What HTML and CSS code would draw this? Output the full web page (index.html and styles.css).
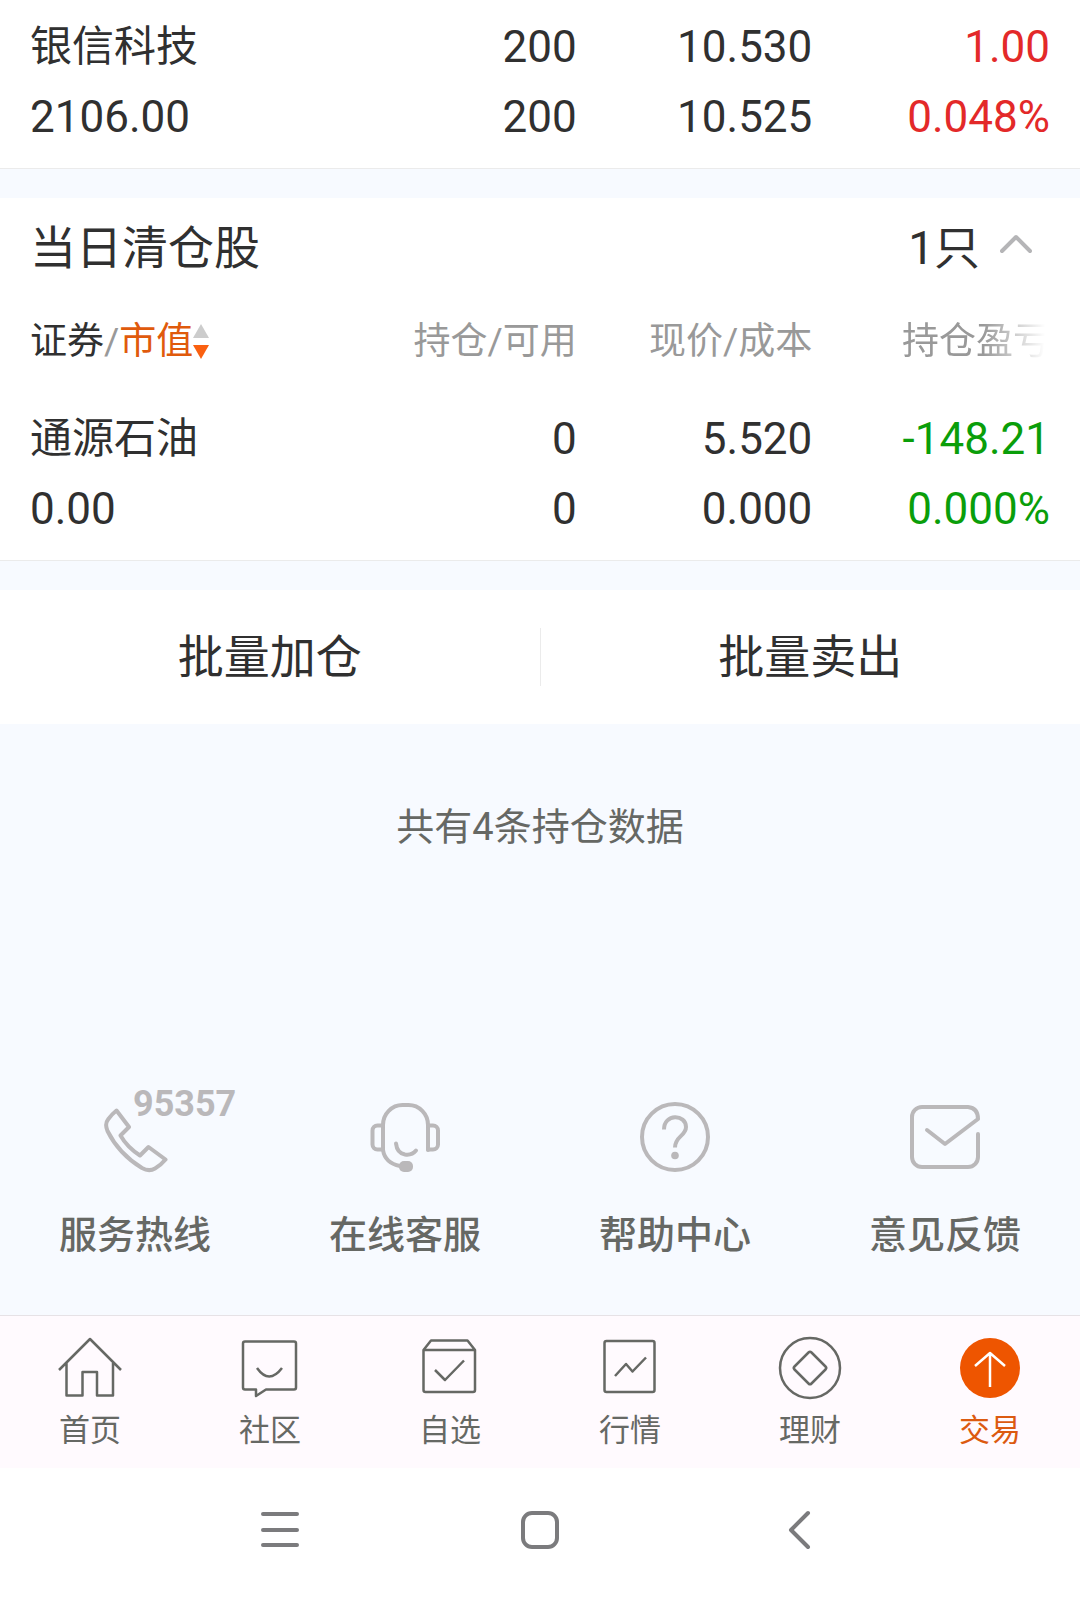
FILE: index.html
```html
<!DOCTYPE html>
<html lang="zh-CN">
<head>
  <meta charset="UTF-8" />
  <meta name="viewport" content="width=device-width, initial-scale=1.0"/>
  <title>交易 | 持仓</title>
  <link rel="stylesheet" href="styles.css">
</head>
<body>
  <main>
    <section class="holdings">
      <table class="stock-table">
        <colgroup><col class="col-name"><col class="col-qty"><col class="col-price"><col class="col-profit"></colgroup>
        <tbody>
          <tr>
            <td><span class="name">银信科技</span><span>2106.00</span></td>
            <td><span>200</span><span>200</span></td>
            <td><span>10.530</span><span>10.525</span></td>
            <td class="up"><span>1.00</span><span>0.048%</span></td>
          </tr>
        </tbody>
      </table>
    </section>

    <section class="cleared">
      <div class="section-title">
        <h2>当日清仓股</h2>
        <button class="toggle" type="button">
          1只
          <svg class="chevron" viewBox="0 0 32 20"><path d="M2 17 16 3l14 14"/></svg>
        </button>
      </div>
      <table class="stock-table">
        <colgroup><col class="col-name"><col class="col-qty"><col class="col-price"><col class="col-profit"></colgroup>
        <thead>
          <tr>
            <th>
              <div class="sort">
                <span class="dark">证券</span>/<span class="active">市值</span>
                <svg class="sort-icon" viewBox="0 0 16 36"><path class="asc" d="M8 0 16 14H0z"/><path class="desc" d="M0 21h16L8 35z"/></svg>
              </div>
            </th>
            <th>持仓/可用</th>
            <th>现价/成本</th>
            <th><span class="fade">持仓盈亏</span></th>
          </tr>
        </thead>
        <tbody>
          <tr>
            <td><span class="name">通源石油</span><span>0.00</span></td>
            <td><span>0</span><span>0</span></td>
            <td><span>5.520</span><span>0.000</span></td>
            <td class="down"><span>-148.21</span><span>0.000%</span></td>
          </tr>
        </tbody>
      </table>
    </section>

    <div class="batch">
      <button type="button">批量加仓</button>
      <button type="button">批量卖出</button>
    </div>

    <p class="count">共有4条持仓数据</p>

    <div class="services">
      <a href="#">
        <span class="service-icon">
          <svg viewBox="0 0 72 72"><path d="M17.500 9.500 30 26l-8.500 8.500Q28 46 41 54.500l8.500-8.500L66.500 58.500Q62 64 56 67.500 50 71 43 67 20 53 8.500 30 5.500 23 9 18.500 13 13 17.500 9.500z"/></svg>
          <span class="hotline">95357</span>
        </span>
        服务热线
      </a>
      <a href="#">
        <span class="service-icon">
          <svg viewBox="0 0 72 72">
            <path d="M59 49V24A19.500 20 0 0 0 39.500 4h-6A19.500 20 0 0 0 14 24v25q2 13 17 16"/>
            <path d="M14 24.500H8.500a5 5 0 0 0-5 5v14a5 5 0 0 0 5 5H14M59 24.500h5a5 5 0 0 1 5 5v14a5 5 0 0 1-5 5h-5"/>
            <path d="M27 42.500Q28 52 36 53.500q7 1 11-4"/>
            <rect class="solid" x="30" y="60" width="14" height="11" rx="5"/>
          </svg>
        </span>
        在线客服
      </a>
      <a href="#">
        <span class="service-icon">
          <svg viewBox="0 0 72 72">
            <circle cx="36" cy="36" r="33"/>
            <path class="butt" d="M25 28.500C25 12 47 13 47 26c0 9-11 9-11 20.500"/>
            <circle class="solid" cx="36" cy="54.500" r="3.800"/>
          </svg>
        </span>
        帮助中心
      </a>
      <a href="#">
        <span class="service-icon">
          <svg viewBox="0 0 72 72"><path d="M69 33v23a10 10 0 0 1-10 10H13A10 10 0 0 1 3 56V16A10 10 0 0 1 13 6h46q10 1 10 12L36 43 18 29"/></svg>
        </span>
        意见反馈
      </a>
    </div>
  </main>

  <nav class="tabbar">
    <a href="#">
      <svg viewBox="0 0 64 64"><path d="M1 34 32 3l31 31M8.500 27v32.500h16V36H39v23.500h16V27"/></svg>
      首页
    </a>
    <a href="#">
      <svg viewBox="0 0 64 64"><path d="M7 5.500h49a2 2 0 0 1 2 2v44a2 2 0 0 1-2 2H28L18 60v-6.500H7a2 2 0 0 1-2-2v-44a2 2 0 0 1 2-2zM19 32q12 17 25 0"/></svg>
      社区
    </a>
    <a href="#">
      <svg viewBox="0 0 64 64"><path d="M5.500 14v40a2 2 0 0 0 2 2H55a2 2 0 0 0 2-2V14zM5.500 14l7.500-9.500h36.500L57 14M17 34l10 10 19-19.500"/></svg>
      自选
    </a>
    <a href="#">
      <svg viewBox="0 0 64 64"><rect x="6.500" y="5" width="50" height="51" rx="2"/><path d="M17 40l11-12 6.500 7.500L48 21.500"/></svg>
      行情
    </a>
    <a href="#">
      <svg viewBox="0 0 64 64"><circle cx="32" cy="32" r="30"/><path d="M30.500 16.500q1.500-1.500 3 0l14 14q1.500 1.500 0 3l-14 14q-1.500 1.500-3 0l-14-14q-1.500-1.500 0-3z"/></svg>
      理财
    </a>
    <a href="#" class="current">
      <svg viewBox="0 0 64 64"><circle cx="32" cy="32" r="30"/><path d="M32 51V17M17 30l15-13 15 13"/></svg>
      交易
    </a>
  </nav>

  <div class="system-nav">
    <button type="button" aria-label="菜单"><svg viewBox="0 0 40 40"><path d="M3 4h34M3 20h34M3 35h34"/></svg></button>
    <button type="button" aria-label="主页"><svg viewBox="0 0 40 40"><rect x="3" y="3" width="34" height="34" rx="9"/></svg></button>
    <button type="button" aria-label="返回"><svg viewBox="0 0 40 40"><path d="M28 3 11 20l17 17"/></svg></button>
  </div>
</body>
</html>
```
FILE: styles.css
```css
* {
  box-sizing: border-box;
}

body {
  font-family: Roboto, "Noto Sans CJK SC", sans-serif;
  background-color: #f7faff;
  color: #303030;
  margin: 0;
  min-height: 100vh;
  display: flex;
  flex-direction: column;
}

button {
  font: inherit;
  color: inherit;
  background: none;
  border: none;
  padding: 0;
  cursor: pointer;
}

a {
  color: inherit;
  text-decoration: none;
}

svg {
  display: block;
  fill: none;
  stroke: currentColor;
}

main {
  flex: 1;
  display: flex;
  flex-direction: column;
}

/* stock lists */
.holdings,
.cleared {
  background: #fff;
  padding: 0 30px;
  border-bottom: 1px solid #ebebeb;
  margin-bottom: 29px;
}

.holdings {
  padding-top: 2px;
}

.stock-table {
  width: 100%;
  table-layout: fixed;
  border-collapse: collapse;
}

.col-name {
  width: 30%;
}

.col-qty {
  width: 23.6%;
}

.col-price {
  width: 23.1%;
}

.col-profit {
  width: 23.3%;
}

.stock-table th {
  height: 104px;
  padding: 0;
  font-size: 37px;
  font-weight: 400;
  line-height: 48px;
  text-align: right;
  white-space: nowrap;
  color: #999;
}

.stock-table td {
  padding: 10px 0 16px;
  font-size: 44px;
  line-height: 70px;
  text-align: right;
}

.stock-table td:first-child {
  text-align: left;
}

.stock-table td span {
  display: block;
}

.stock-table .name {
  font-size: 42px;
}

.up {
  color: #e32929;
}

.down {
  color: #0a9e0a;
}

.sort {
  display: flex;
  align-items: center;
}

.dark {
  color: #303030;
}

.active {
  color: #e05a0c;
}

.sort-icon {
  width: 16px;
  height: 36px;
  stroke: none;
}

.asc {
  fill: #ccc;
}

.desc {
  fill: #fa6010;
}

.fade {
  display: block;
  -webkit-mask-image: linear-gradient(to right, #000 72%, transparent 98%);
  mask-image: linear-gradient(to right, #000 72%, transparent 98%);
}

.section-title {
  display: flex;
  align-items: center;
  justify-content: space-between;
  height: 92px;
  font-size: 46px;
}

.section-title h2 {
  margin: 0;
  font-size: 46px;
  font-weight: 400;
}

.toggle {
  display: flex;
  align-items: center;
  gap: 20px;
  padding-right: 18px;
}

.chevron {
  width: 32px;
  height: 20px;
  color: #b5b5b7;
  stroke-width: 4;
  stroke-linecap: round;
  stroke-linejoin: round;
}

/* batch buttons */
.batch {
  display: flex;
  background: #fff;
  height: 134px;
  align-items: center;
}

.batch button {
  flex: 1;
  font-size: 46px;
  line-height: 58px;
}

.batch button:first-child {
  border-right: 1px solid #ebebeb;
}

.count {
  margin: 74px 0;
  text-align: center;
  font-size: 38px;
  line-height: 58px;
  color: #666864;
}

/* service shortcuts */
.services {
  display: grid;
  grid-template-columns: repeat(4, 1fr);
  margin-top: auto;
  padding-bottom: 56px;
}

.services a {
  display: flex;
  flex-direction: column;
  align-items: center;
  gap: 38px;
  font-size: 38px;
  font-weight: 500;
  line-height: 48px;
  color: #666864;
}

.service-icon {
  position: relative;
  color: #bab8ba;
}

.service-icon svg {
  width: 72px;
  height: 72px;
  stroke-width: 4;
  stroke-linecap: round;
  stroke-linejoin: round;
}

.service-icon .butt {
  stroke-linecap: butt;
}

.service-icon .solid {
  fill: currentColor;
  stroke: none;
}

.hotline {
  position: absolute;
  left: 34px;
  top: -15px;
  font-size: 36px;
  font-weight: 700;
  line-height: 36px;
}

/* bottom tabs */
.tabbar {
  display: grid;
  grid-template-columns: repeat(6, 1fr);
  background: #fffafe;
  border-top: 1px solid #e6e2e6;
  padding: 20px 0 17px;
}

.tabbar a {
  display: flex;
  flex-direction: column;
  align-items: center;
  gap: 11px;
  font-size: 31px;
  line-height: 40px;
  color: #666864;
}

.tabbar svg {
  width: 64px;
  height: 64px;
  stroke-width: 2.5;
  stroke-linejoin: round;
}

.tabbar .current {
  color: #dc5a10;
}

.current circle {
  fill: #ee5500;
  stroke: none;
}

.current path {
  stroke: #fff;
}

.system-nav {
  display: flex;
  justify-content: center;
  align-items: center;
  gap: 220px;
  height: 130px;
  padding-bottom: 6px;
  background: #fff;
  color: #7b7b7d;
}

.system-nav svg {
  width: 40px;
  height: 40px;
  stroke-width: 4;
  stroke-linecap: round;
  stroke-linejoin: round;
}
```
